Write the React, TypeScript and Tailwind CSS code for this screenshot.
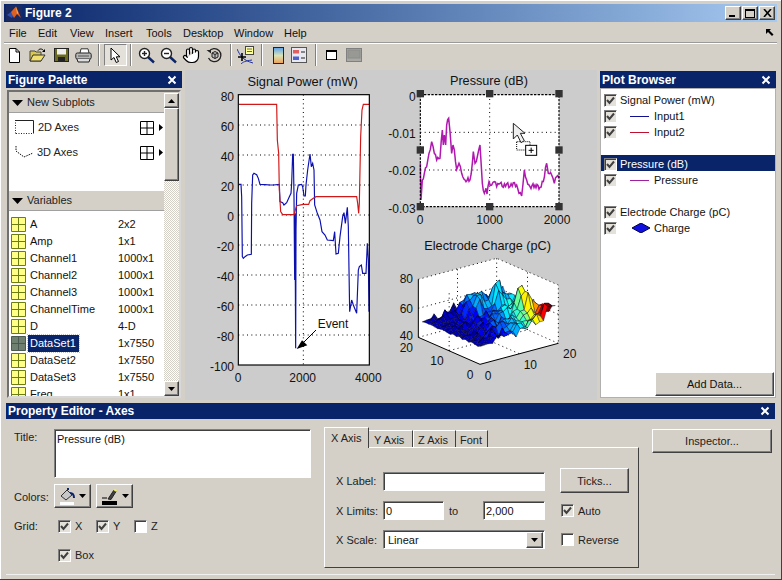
import React from 'react';
import { Hand } from 'lucide-react';

const raised =
  'border border-t-white border-l-white border-r-[#404040] border-b-[#404040] shadow-[inset_-1px_-1px_0_#808080] bg-[#d4d0c8]';
const sunken =
  'border border-t-[#808080] border-l-[#808080] border-r-white border-b-white shadow-[inset_1px_1px_0_#404040] bg-white';

const CloseX = () => (
  <svg width="10" height="10" viewBox="0 0 10 10">
    <path d="M1.5 1.5L8.5 8.5M8.5 1.5L1.5 8.5" stroke="#fff" strokeWidth="2" />
  </svg>
);

const Check = ({ on = true }: { on?: boolean }) => (
  <span
    className={`shrink-0 w-[13px] h-[13px] border border-t-[#808080] border-l-[#808080] border-r-white border-b-white shadow-[inset_1px_1px_0_#404040] flex items-center justify-center ${
      on ? 'bg-[#e4e1da]' : 'bg-white'
    }`}
  >
    {on && (
      <svg width="9" height="9" viewBox="0 0 9 9">
        <path d="M1 4L3.5 7L8 1.5" fill="none" stroke="#404040" strokeWidth="2" />
      </svg>
    )}
  </span>
);

const PanelTitle = ({ title }: { title: string }) => (
  <div className="h-[17px] bg-[#0a246a] text-white font-bold text-[12px] flex items-center justify-between pl-[2px] pr-[5px] shrink-0">
    <span>{title}</span>
    <CloseX />
  </div>
);

const Sep = ({ w }: { w: string }) => (
  <div className={`${w} flex justify-center shrink-0`}>
    <div className="w-[2px] h-[22px] border-l border-l-[#808080] border-r border-r-white" />
  </div>
);

const Slot = ({ w, children }: { w: string; children: React.ReactNode }) => (
  <div className={`${w} h-[22px] flex items-center justify-center shrink-0`}>{children}</div>
);

const Magnifier = ({ plus }: { plus?: boolean }) => (
  <svg width="17" height="17" viewBox="0 0 17 17">
    <path d="M10 10L16 15.5" stroke="#0a246a" strokeWidth="2.4" />
    <circle cx="6.5" cy="6.5" r="5" fill="#fff" stroke="#222" strokeWidth="1.4" />
    <path d="M4 6.5H9" stroke="#222" strokeWidth="1.4" />
    {plus && <path d="M6.5 4V9" stroke="#222" strokeWidth="1.4" />}
  </svg>
);

const Toolbar = () => (
  <div className="h-[24px] flex items-start ml-[-1px]">
    <Slot w="w-[22px]">
      <svg width="13" height="15" viewBox="0 0 13 15">
        <path d="M1.5.5H8L11.5 4V14.5H1.5Z" fill="#fff" stroke="#000" />
        <path d="M8 .5V4H11.5" fill="none" stroke="#000" />
      </svg>
    </Slot>
    <Slot w="w-[25px]">
      <svg width="17" height="14" viewBox="0 0 17 14">
        <path d="M1 3H6L7 4H12V13H1Z" fill="#d8c850" stroke="#444" />
        <path d="M1 13L4 7H16L12 13Z" fill="#f0e070" stroke="#333" />
        <path d="M9 2.5C10.5.5 13 .5 14.5 2.5" fill="none" stroke="#000" />
        <path d="M16 1V4H13Z" fill="#000" />
      </svg>
    </Slot>
    <Slot w="w-[22px]">
      <svg width="15" height="14" viewBox="0 0 15 14">
        <rect x=".5" y=".5" width="14" height="13" fill="#6a6a20" stroke="#222" />
        <rect x="3" y="1" width="9" height="5.5" fill="#eee" />
        <rect x="4" y="9" width="7" height="4.5" fill="#222" />
      </svg>
    </Slot>
    <Slot w="w-[22px]">
      <svg width="17" height="15" viewBox="0 0 17 15">
        <path d="M5 5L6 .8H13L14 5" fill="#fff" stroke="#333" />
        <rect x=".8" y="5" width="15.4" height="6" rx="1.5" fill="#b8b8b8" stroke="#222" />
        <path d="M3 8H14" stroke="#555" />
        <path d="M2 11L3 14H14L15 11" fill="#ddd" stroke="#222" />
      </svg>
    </Slot>
    <Sep w="w-[10px]" />
    <div className="w-[23px] h-[22px] flex items-center justify-center shrink-0 border border-t-[#808080] border-l-[#808080] border-r-white border-b-white bg-[#e4e1da]">
      <svg width="11" height="17" viewBox="0 0 11 17">
        <path d="M1 1V13L4 10.5L6.2 15.5L8.5 14.5L6.3 9.8H10Z" fill="#fff" stroke="#000" />
      </svg>
    </div>
    <Sep w="w-[8px]" />
    <Slot w="w-[22px]"><Magnifier plus /></Slot>
    <Slot w="w-[22px]"><Magnifier /></Slot>
    <Slot w="w-[24px]"><Hand size={18} fill="#fff" stroke="#000" strokeWidth={1.6} /></Slot>
    <Slot w="w-[23px]">
      <svg width="17" height="16" viewBox="0 0 17 16">
        <path d="M3 4.5A6.5 6.5 0 1 1 2.5 11" fill="none" stroke="#222" strokeWidth="1.3" />
        <path d="M.5 3H5V6.5Z" fill="#222" />
        <path d="M6 6L9 4.5L12 6V10L9 11.5L6 10Z" fill="#bbb" stroke="#222" />
        <path d="M6 6L9 7.5L12 6M9 7.5V11.5" fill="none" stroke="#222" />
      </svg>
    </Slot>
    <Sep w="w-[10px]" />
    <Slot w="w-[20px]">
      <svg width="18" height="19" viewBox="0 0 18 19">
        <path d="M0 3C3 9 5 14 16 17" fill="none" stroke="#2030a0" />
        <path d="M4 18C6 16 8 15 15 14" fill="none" stroke="#2030a0" />
        <rect x="8.5" y=".5" width="8" height="8" fill="#ffff99" stroke="#444" />
        <path d="M10 3H15M10 5.5H15" stroke="#666" />
        <path d="M1 11H9M5 7V15" stroke="#000" strokeWidth="1.6" />
      </svg>
    </Slot>
    <Sep w="w-[12px]" />
    <Slot w="w-[20px]">
      <svg width="11" height="17" viewBox="0 0 11 17">
        <defs>
          <linearGradient id="cb" x1="0" y1="0" x2="0" y2="1">
            <stop offset="0" stopColor="#5aa0e8" />
            <stop offset=".5" stopColor="#d8e4b8" />
            <stop offset="1" stopColor="#f0a050" />
          </linearGradient>
        </defs>
        <rect x=".5" y=".5" width="10" height="16" fill="url(#cb)" stroke="#222" />
      </svg>
    </Slot>
    <Slot w="w-[22px]">
      <svg width="16" height="16" viewBox="0 0 16 16">
        <rect x=".5" y=".5" width="15" height="15" fill="#e8e8f0" stroke="#555" />
        <rect x="2" y="3" width="6" height="3.5" fill="#e06060" />
        <rect x="2" y="9.5" width="6" height="3.5" fill="#5060d0" />
        <path d="M10 5H14M10 11H14" stroke="#222" />
      </svg>
    </Slot>
    <Sep w="w-[12px]" />
    <Slot w="w-[18px]">
      <svg width="11" height="10" viewBox="0 0 11 10">
        <rect x=".5" y=".5" width="10" height="9" fill="#fff" stroke="#000" />
        <path d="M1 1.5H10" stroke="#000" />
      </svg>
    </Slot>
    <Slot w="w-[28px]">
      <svg width="16" height="14" viewBox="0 0 16 14">
        <rect x=".5" y=".5" width="15" height="13" fill="#a8a8a4" stroke="#808080" />
        <rect x="2" y="2" width="12" height="8" fill="#989894" stroke="#8c8c88" />
      </svg>
    </Slot>
  </div>
);

const menus: [string, string][] = [
  ['File', 'w-[29px]'],
  ['Edit', 'w-[32px]'],
  ['View', 'w-[35px]'],
  ['Insert', 'w-[41px]'],
  ['Tools', 'w-[37px]'],
  ['Desktop', 'w-[51px]'],
  ['Window', 'w-[50px]'],
  ['Help', 'w-[30px]'],
];

const variables: [string, string][] = [
  ['A', '2x2'],
  ['Amp', '1x1'],
  ['Channel1', '1000x1'],
  ['Channel2', '1000x1'],
  ['Channel3', '1000x1'],
  ['ChannelTime', '1000x1'],
  ['D', '4-D'],
  ['DataSet1', '1x7550'],
  ['DataSet2', '1x7550'],
  ['DataSet3', '1x7550'],
  ['Freq', '1x1'],
];

const SectionHead = ({ label }: { label: string }) => (
  <div className="h-[20px] bg-[#d4d0c8] border-b border-b-[#a0a0a0] flex items-center gap-[4px] pl-[3px] shrink-0 text-[#222]">
    <svg width="11" height="6" viewBox="0 0 11 6">
      <path d="M0 0H11L5.5 6Z" fill="#000" />
    </svg>
    <span>{label}</span>
  </div>
);

const GridPick = () => (
  <div className="flex items-center gap-[5px] ml-auto mr-[1px]">
    <svg width="14" height="14" viewBox="0 0 14 14">
      <path d="M.5.5H13.5V13.5H.5ZM7 .5V13.5M.5 7H13.5" fill="#fff" stroke="#000" />
    </svg>
    <svg width="4" height="7" viewBox="0 0 4 7">
      <path d="M0 0L4 3.5L0 7Z" fill="#000" />
    </svg>
  </div>
);

const VarIcon = ({ selected }: { selected?: boolean }) => (
  <svg width="15" height="15" viewBox="0 0 15 15" className="shrink-0">
    <path
      d="M.5.5H14.5V14.5H.5ZM7.5.5V14.5M.5 7.5H14.5"
      fill={selected ? '#6f7f70' : '#ffff88'}
      stroke={selected ? '#4a5a50' : '#6d7d10'}
      strokeWidth="1"
    />
  </svg>
);

const ScrollBtn = ({ up }: { up?: boolean }) => (
  <div className={`${raised} h-[15px] flex items-center justify-center shrink-0`}>
    <svg width="7" height="4" viewBox="0 0 7 4">
      <path d={up ? 'M0 4H7L3.5 0Z' : 'M0 0H7L3.5 4Z'} fill="#000" />
    </svg>
  </div>
);

const FigurePalette = () => (
  <div className="w-[176px] shrink-0 pt-[1px] pb-[2px] flex flex-col">
    <PanelTitle title="Figure Palette" />
    <div className="mt-[2px] mx-[1px] flex-1 min-h-0 border-2 border-t-[#707070] border-l-[#707070] border-r-[#d8d8d8] border-b-[#d8d8d8] flex bg-[#d4d0c8] pt-[1px]">
      <div className="flex-1 min-w-0 flex flex-col overflow-hidden bg-white">
        <SectionHead label="New Subplots" />
        <div className="h-[78px] shrink-0">
          <div className="h-[25px] flex items-center pl-[6px] mt-[2px]">
            <svg width="19" height="15" viewBox="0 0 19 15" className="shrink-0">
              <path d="M1 .5H18.5V13.5" fill="none" stroke="#222" />
              <path d="M.5 0V14M1 13.5H18" fill="none" stroke="#222" strokeDasharray="1 1.5" />
            </svg>
            <span className="ml-[4px] text-[#222]">2D Axes</span>
            <GridPick />
          </div>
          <div className="h-[25px] flex items-center pl-[6px]">
            <svg width="19" height="13" viewBox="0 0 19 13" className="shrink-0">
              <path d="M1 0V5L9 11L18 7" fill="none" stroke="#111" strokeDasharray="1.5 1" />
            </svg>
            <span className="ml-[3px] text-[#222]">3D Axes</span>
            <GridPick />
          </div>
        </div>
        <SectionHead label="Variables" />
        <div className="pt-[5px] flex flex-col">
          {variables.map(([name, size]) => (
            <div key={name} className="h-[17px] shrink-0 flex items-center pl-[2px]">
              <VarIcon selected={name === 'DataSet1'} />
              <span className="ml-[4px] w-[88px]">
                <span
                  className={
                    name === 'DataSet1'
                      ? 'inline-block bg-[#0a246a] text-white pr-[3px] pl-[2px] outline-1 outline-dotted outline-[#c0c0c0] -ml-[2px]'
                      : 'text-[#111]'
                  }
                >
                  {name}
                </span>
              </span>
              <span className="text-[#111]">{size}</span>
            </div>
          ))}
        </div>
      </div>
      <div className="w-[15px] shrink-0 flex flex-col bg-[repeating-conic-gradient(#d4d0c8_0_25%,#ffffff_0_50%)] bg-[length:2px_2px]">
        <ScrollBtn up />
        <div className={`${raised} h-[73px] shrink-0`} />
        <div className="flex-1" />
        <ScrollBtn />
      </div>
    </div>
  </div>
);

const blue =
  '147,343 153,343 155,380 157,560 160,565 165,560 172,555 184,553 185,400 188,315 192,310 200,314 205,325 210,343 225,344 240,345 250,345 268,343 270,395 278,398 282,405 290,398 298,380 303,370 305,340 308,253 310,253 312,380 314,630 315,430 317,835 318,480 320,370 325,345 335,343 338,350 342,378 346,378 348,345 353,300 360,252 364,290 368,280 372,300 374,405 382,430 390,450 396,485 405,495 412,510 430,512 434,485 438,552 445,550 450,500 458,440 462,428 466,460 472,412 475,470 477,600 479,725 485,690 490,705 500,730 505,600 508,590 514,585 518,610 528,610 532,520 535,570 537,725';
const red =
  '147,103 260,103 262,210 266,250 268,360 272,425 278,434 312,434 316,420 320,407 340,403 356,403 360,392 370,385 378,380 500,380 503,400 506,430 508,400 512,200 516,120 520,103 537,103';
const magentaBase =
  '106,280 108,390 112,330 118,310 125,290 132,250 140,215 148,250 155,270 165,265 172,180 175,225 178,195 182,225 185,165 191,145 195,185 200,250 204,225 208,240 215,298 222,280 230,310 240,330 255,330 262,280 265,245 270,280 278,255 285,225 289,290 292,340 298,370 303,355 306,372 312,335 320,345 328,335 335,350 345,340 355,352 365,342 375,350 385,338 395,345 402,370 410,378 418,300 425,330 435,350 450,345 465,352 475,335 485,280 490,310 500,315 508,340 515,320 522,325';

// the pressure trace is noisy, so break each segment up and shake it a bit
const roughen = (src: string, amp: number) => {
  const pts = src.split(' ').map((p) => p.split(',').map(Number));
  const out: string[] = [];
  pts.forEach(([x, y], i) => {
    out.push(`${x},${y}`);
    const next = pts[i + 1];
    if (!next) return;
    const steps = Math.max(1, Math.floor((next[0] - x) / 3));
    for (let s = 1; s < steps; s++) {
      const t = s / steps;
      const wob = Math.sin((x + s) * 91.7 + s * 13.1) * amp;
      out.push(`${x + (next[0] - x) * t},${y + (next[1] - y) * t + wob}`);
    }
  });
  return out.join(' ');
};
const magenta = roughen(magentaBase, 7);

const SignalPlot = () => (
  <svg width="195" height="320" viewBox="0 0 585 960" className="shrink-0">
    <rect x="145" y="74" width="393" height="811" fill="#fff" />
    <g stroke="#000" strokeWidth="3" strokeDasharray="3 10">
      {[165, 255, 345, 435, 525, 615, 705, 795].map((y) => (
        <line key={y} x1="145" x2="538" y1={y} y2={y} />
      ))}
      <line x1="340" x2="340" y1="74" y2="885" />
    </g>
    <polyline points={blue} fill="none" stroke="#0c10b0" strokeWidth="3.5" />
    <polyline points={red} fill="none" stroke="#d01818" strokeWidth="3.5" />
    <rect x="145" y="74" width="393" height="811" fill="none" stroke="#000" strokeWidth="3.5" />
    <g fontSize="36" textAnchor="end" fill="#111">
      {['80', '60', '40', '20', '0', '-20', '-40', '-60', '-80', '-100'].map((t, i) => (
        <text key={t} x="132" y={92 + i * 90}>
          {t}
        </text>
      ))}
    </g>
    <g fontSize="36" textAnchor="middle" fill="#111">
      <text x="144" y="936">0</text>
      <text x="338" y="936">2000</text>
      <text x="535" y="936">4000</text>
      <text x="338" y="48" fontSize="38.500">Signal Power (mW)</text>
    </g>
    <text x="383" y="773" fontSize="36" fill="#111">Event</text>
    <path d="M378 780L340 818" stroke="#000" strokeWidth="3" />
    <path d="M320 837L352 826L336 811Z" fill="#000" />
  </svg>
);

const handlePos: [number, number][] = [
  [106, 71], [314, 71], [522, 71],
  [106, 240], [522, 240],
  [106, 410], [314, 410], [522, 410],
];

const PressurePlot = () => (
  <svg width="210" height="160" viewBox="0 0 630 480" className="block">
    <rect x="106" y="74" width="416" height="336" fill="#fff" />
    <g stroke="#000" strokeWidth="3" strokeDasharray="3 10">
      <line x1="106" x2="522" y1="187" y2="187" />
      <line x1="106" x2="522" y1="300" y2="300" />
      <line x1="314" x2="314" y1="74" y2="410" />
    </g>
    <polyline points={magenta} fill="none" stroke="#b018b0" strokeWidth="4.500" />
    <rect x="106" y="74" width="416" height="336" fill="none" stroke="#000" strokeWidth="3.5" strokeDasharray="7 4" />
    {handlePos.map(([x, y]) => (
      <rect key={`${x}-${y}`} x={x - 11} y={y - 11} width="22" height="22" fill="#333" />
    ))}
    <g fontSize="36" textAnchor="end" fill="#111">
      <text x="92" y="92">0</text>
      <text x="92" y="203">-0.01</text>
      <text x="92" y="316">-0.02</text>
      <text x="92" y="430">-0.03</text>
    </g>
    <g fontSize="36" textAnchor="middle" fill="#111">
      <text x="105" y="463">0</text>
      <text x="314" y="463">1000</text>
      <text x="516" y="463">2000</text>
      <text x="312" y="46" fontSize="38">Pressure (dB)</text>
    </g>
    <rect x="395" y="215" width="40" height="25" fill="none" stroke="#000" strokeWidth="3" strokeDasharray="3 3" />
    <path d="M385 160V207L397 195L408 218L418 212L406 190H420Z" fill="#eee" stroke="#222" strokeWidth="3" />
    <rect x="422" y="226" width="33" height="30" fill="#fff" stroke="#000" strokeWidth="3" />
    <path d="M431 241H446M438.500 233V249" stroke="#000" strokeWidth="3" />
  </svg>
);

const clamp = (v: number) => Math.max(0, Math.min(1, v));
const jet = (c: number) => {
  const r = Math.round(255 * clamp(1.5 - Math.abs(4 * c - 3)));
  const g = Math.round(255 * clamp(1.5 - Math.abs(4 * c - 2)));
  const b = Math.round(255 * clamp(1.5 - Math.abs(4 * c - 1)));
  return `rgb(${r},${g},${b})`;
};
const gauss = (x: number, y: number, px: number, py: number, h: number, s: number) =>
  h * Math.exp(-((x - px) ** 2 + (y - py) ** 2) / (2 * s * s));
const hash = (x: number, y: number) => {
  const v = Math.sin(x * 12.9898 + y * 78.233) * 43758.5453;
  return (v - Math.floor(v)) * 2 - 1;
};
const surfZ = (x: number, y: number) =>
  50 +
  x * 0.45 +
  4 * hash(x, y) * Math.min(1, x / 6) +
  gauss(x, y, 11.3, 16, 12, 1.6) +
  gauss(x, y, 15.7, 14, 18, 0.9) +
  gauss(x, y, 16.3, 8, 17, 0.9) +
  gauss(x, y, 17.2, 6, 10, 0.8) +
  gauss(x, y, 18.9, 2, 8, 1.1);
const surfC = (x: number, y: number, z: number) =>
  clamp(
    0.04 +
      0.95 * (x / 20) ** 2 * (1 - y / 22) +
      Math.max(z - 55, 0) * 0.008 +
      gauss(x, y, 11.3, 16, 0.12, 2) +
      gauss(x, y, 19, 2.5, 0.25, 1.2) +
      0.05 * hash(x + 3, y + 7) * Math.min(1, x / 6),
  );
const project = (x: number, y: number, z: number) =>
  `${285 + 11.75 * x - 9.25 * y},${403 - 3.15 * x - 4.05 * y - 4.35 * (z - 40)}`;

const quads: { key: string; pts: string; fill: string }[] = [];
for (let sum = 38; sum >= 2; sum--) {
  for (let x = 1; x < 20; x++) {
    const y = sum - x;
    if (y < 1 || y >= 20) continue;
    const corners: [number, number][] = [
      [x, y],
      [x + 1, y],
      [x + 1, y + 1],
      [x, y + 1],
    ];
    const zs = corners.map(([a, b]) => surfZ(a, b));
    const avg = zs.reduce((s, v) => s + v, 0) / 4;
    quads.push({
      key: `${x}-${y}`,
      pts: corners.map(([a, b], i) => project(a, b, zs[i])).join(' '),
      fill: jet(surfC(x + 0.5, y + 0.5, avg)),
    });
  }
}

const ChargePlot = () => (
  <svg width="210" height="170" viewBox="0 0 630 510" className="block">
    <path d="M100 148L335 85L520 165V340L285 403L100 322Z" fill="#fff" />
    <g fill="none" stroke="#000" strokeWidth="3" strokeDasharray="3 10">
      <path d="M100 148L335 85L520 165V340" />
      <path d="M335 85V259M100 322L335 259L520 340" />
      <path d="M100 235L335 172L520 253" />
      <path d="M192.500 362V188M217.500 290V117M427.500 299.500V125" />
      <path d="M402.500 371L217.500 290M192.500 362L427.500 299.500" />
    </g>
    <path d="M100 148V322L285 403L520 340" fill="none" stroke="#000" strokeWidth="3" />
    {quads.map((q) => (
      <polygon key={q.key} points={q.pts} fill={q.fill} stroke="#020220" strokeOpacity=".7" strokeWidth="1.8" />
    ))}
    <g fontSize="36" fill="#111" textAnchor="middle">
      <text x="64" y="160">80</text>
      <text x="64" y="250">60</text>
      <text x="64" y="331">40</text>
      <text x="64" y="365">20</text>
      <text x="156" y="406">10</text>
      <text x="255" y="446">0</text>
      <text x="309" y="449">0</text>
      <text x="436" y="418">10</text>
      <text x="554" y="385">20</text>
      <text x="308" y="60" fontSize="38">Electrode Charge (pC)</text>
    </g>
  </svg>
);

const BrowserRow = ({
  label,
  selected,
  swatch,
  className = '',
}: {
  label: string;
  selected?: boolean;
  swatch?: string;
  className?: string;
}) => (
  <div
    className={`h-[16px] flex items-center pl-[3px] pr-[1px] ${
      selected ? 'bg-[#0a246a] text-white pt-[2px]' : 'text-[#111]'
    } ${className}`}
  >
    <Check />
    {swatch === 'diamond' ? (
      <>
        <svg width="18" height="10" viewBox="0 0 18 10" className="ml-[15px] mr-[4px] shrink-0">
          <path d="M0 5L9 0L18 5L9 10Z" fill="#1010e0" stroke="#000040" />
        </svg>
        <span>{label}</span>
      </>
    ) : swatch ? (
      <>
        <div className={`ml-[13px] w-[19px] h-[1px] shrink-0 ${swatch}`} />
        <span className="ml-[5px]">{label}</span>
      </>
    ) : (
      <span className="ml-[3px]">{label}</span>
    )}
  </div>
);

const PlotBrowser = () => (
  <div className="w-[176px] shrink-0 pt-[1px] pb-[2px] flex flex-col">
    <PanelTitle title="Plot Browser" />
    <div className="flex-1 min-h-0 bg-white border border-[#b0b0b0] flex flex-col justify-between pt-[3px]">
      <div className="flex flex-col">
        <BrowserRow label="Signal Power (mW)" />
        <BrowserRow label="Input1" swatch="bg-[#101090]" />
        <BrowserRow label="Input2" swatch="bg-[#c01030]" />
        <div className="h-[15px]" />
        <BrowserRow label="Pressure (dB)" selected />
        <BrowserRow label="Pressure" swatch="bg-[#a020a0]" className="mt-[1px]" />
        <div className="h-[16px]" />
        <BrowserRow label="Electrode Charge (pC)" />
        <BrowserRow label="Charge" swatch="diamond" />
      </div>
      <div className="flex justify-end pr-[1px] pb-[1px]">
        <button className={`${raised} w-[119px] h-[24px] text-[#111] text-[11px]`}>Add Data...</button>
      </div>
    </div>
  </div>
);

const DropArrow = () => (
  <svg width="7" height="4" viewBox="0 0 7 4" className="shrink-0">
    <path d="M0 0H7L3.5 4Z" fill="#000" />
  </svg>
);

const PropertyEditor = () => (
  <div className="mt-[3px] mx-[2px] flex flex-col">
    <div className="h-[16px] bg-[#0a246a] text-white font-bold text-[12px] flex items-center justify-between pl-[2px] pr-[5px] shrink-0">
      <span>Property Editor - Axes</span>
      <CloseX />
    </div>
    <div className="h-[156px] flex pl-[8px] pt-[8px] text-[#222] border-b border-b-[#f0f0f0]">
      <div className="w-[297px] shrink-0 flex flex-col">
        <div className="flex mt-[2px]">
          <span className="w-[40px]">Title:</span>
          <div className={`${sunken} w-[257px] h-[49px] pl-[2px] pt-[1px] text-[#111]`}>Pressure (dB)</div>
        </div>
        <div className="flex items-center mt-[6px] h-[24px]">
          <span className="w-[40px] pt-[2px]">Colors:</span>
          <button className={`${raised} w-[37px] h-[24px] flex items-center justify-center gap-[4px]`}>
            <svg width="16" height="17" viewBox="0 0 16 17">
              <path d="M2 8L8 2L13 7L7 12Z" fill="#c8c8c8" stroke="#333" />
              <path d="M9 2V0M11 5C14 5 15 7 15 10" fill="none" stroke="#0a246a" strokeWidth="2" />
              <rect x="1" y="14" width="14" height="3" fill="#fff" />
            </svg>
            <DropArrow />
          </button>
          <button className={`${raised} w-[37px] h-[24px] ml-[5px] flex items-center justify-center gap-[4px]`}>
            <svg width="17" height="17" viewBox="0 0 17 17">
              <path d="M7 11L13 2L15 3.500L10 11.500Z" fill="#404040" stroke="#222" />
              <path d="M13 1.500L15.500 3" stroke="#eeee66" strokeWidth="2" />
              <path d="M1 10H6" stroke="#000" />
              <rect x="1" y="13" width="15" height="4" fill="#000" />
            </svg>
            <DropArrow />
          </button>
        </div>
        <div className="flex items-center mt-[10px] h-[16px]">
          <span className="w-[44px]">Grid:</span>
          <Check />
          <span className="ml-[4px] w-[21px]">X</span>
          <Check />
          <span className="ml-[4px] w-[21px]">Y</span>
          <Check on={false} />
          <span className="ml-[4px]">Z</span>
        </div>
        <div className="flex items-center mt-[13px] h-[16px] pl-[44px]">
          <Check />
          <span className="ml-[4px]">Box</span>
        </div>
      </div>
      <div className="w-[315px] ml-[13px] shrink-0 flex flex-col">
        <div className="h-[20px] flex items-end relative z-10">
          <div className="w-[45px] h-[21px] -mb-[1px] bg-[#d4d0c8] border-t border-l border-t-white border-l-white border-r border-r-[#404040] pl-[6px] pt-[2px]">X Axis</div>
          <div className="w-[44px] h-[17px] border-t border-t-white border-r border-r-[#404040] pl-[5px] pt-[1px]">Y Axis</div>
          <div className="w-[43px] h-[17px] border-t border-l border-t-white border-l-white border-r border-r-[#404040] pl-[4px] pt-[1px]">Z Axis</div>
          <div className="w-[32px] h-[17px] border-t border-t-white border-r border-r-[#404040] pl-[4px] pt-[1px]">Font</div>
        </div>
        <div className="h-[121px] border border-t-white border-l-white border-r-[#404040] border-b-[#404040] pl-[11px] pt-[20px]">
          <div className="flex items-center h-[25px]">
            <span className="w-[47px] shrink-0 pt-[2px]">X Label:</span>
            <div className={`${sunken} w-[162px] h-[19px] mt-[2px]`} />
            <button className={`${raised} w-[69px] h-[25px] ml-[15px] pt-[1px] text-[11px] text-[#222]`}>Ticks...</button>
          </div>
          <div className="flex items-center h-[19px] mt-[8px]">
            <span className="w-[47px] shrink-0 pt-[2px]">X Limits:</span>
            <div className={`${sunken} w-[61px] h-[19px] pl-[2px] text-[#111] leading-[18px]`}>0</div>
            <span className="w-[39px] pl-[5px] pt-[2px]">to</span>
            <div className={`${sunken} w-[62px] h-[19px] pl-[2px] text-[#111] leading-[18px]`}>2,000</div>
            <div className="ml-[16px]"><Check /></div>
            <span className="ml-[4px] pt-[2px]">Auto</span>
          </div>
          <div className="flex items-center h-[19px] mt-[10px]">
            <span className="w-[47px] shrink-0 pt-[2px]">X Scale:</span>
            <div className={`${sunken} w-[162px] h-[19px] pl-[4px] pr-[1px] text-[#111] flex items-center justify-between`}>
              <span className="pt-[1px]">Linear</span>
              <div className={`${raised} w-[17px] h-[16px] flex items-center justify-center`}>
                <DropArrow />
              </div>
            </div>
            <div className="ml-[16px]"><Check on={false} /></div>
            <span className="ml-[4px] pt-[2px]">Reverse</span>
          </div>
        </div>
      </div>
      <div className="ml-[13px]">
        <button className={`${raised} w-[120px] h-[24px] mt-[2px] pt-[1px] text-[11px] text-[#222]`}>Inspector...</button>
      </div>
    </div>
  </div>
);

export default function App() {
  return (
    <div className="w-[782px] h-[580px] overflow-hidden bg-[#d4d0c8] p-[4px] pb-[2px] text-[11px] font-[family-name:'Liberation_Sans',Arial,sans-serif] border-r border-b border-r-[#404040] border-b-[#404040] shadow-[inset_1px_1px_0_#ffffff]">
      {/* title bar */}
      <div className="h-[18px] bg-gradient-to-r from-[#0a246a] to-[#a6caf0] flex items-center pl-[2px] pr-[2px] text-white font-bold text-[12px]">
        <svg width="16" height="16" viewBox="0 0 16 16" className="shrink-0">
          <rect width="16" height="16" fill="#1a2a60" />
          <path d="M1 10L5 7L8 9L6 13Z" fill="#3050b0" />
          <path d="M5 7L10 1.500L15 13L11 9L8 13Z" fill="#e06020" />
          <path d="M10 1.500L12 8L11 9Z" fill="#f8c060" />
        </svg>
        <span className="ml-[3px]">Figure 2</span>
        <div className="ml-auto flex items-center">
          <div className={`${raised} w-[16px] h-[14px] relative`}>
            <div className="absolute left-[3px] bottom-[2px] w-[6px] h-[2px] bg-black" />
          </div>
          <div className={`${raised} w-[16px] h-[14px] ml-[1px] flex items-center justify-center`}>
            <div className="w-[10px] h-[9px] border border-black border-t-2" />
          </div>
          <div className={`${raised} w-[16px] h-[14px] ml-[1px] flex items-center justify-center`}>
            <svg width="9" height="8" viewBox="0 0 9 8">
              <path d="M1 0L8 8M8 0L1 8" stroke="#000" strokeWidth="1.6" />
            </svg>
          </div>
        </div>
      </div>
      {/* menu */}
      <div className="h-[20px] flex items-center pl-[5px] pr-[3px] text-[#111] text-[11px]">
        {menus.map(([m, w]) => (
          <span key={m} className={`${w} pt-[2px]`}>
            {m}
          </span>
        ))}
        <svg width="8" height="7" viewBox="0 0 8 7" className="ml-auto">
          <path d="M0 0H5L3.500 1.500L7.500 5.500L6 7L2 3L0 5Z" fill="#000" />
        </svg>
      </div>
      <div className="h-[2px] border-t border-t-[#9a9a9a] border-b border-b-white" />
      <Toolbar />
      <div className="h-[2px]" />
      {/* main row */}
      <div className="h-[330px] flex pl-[2px]">
        <FigurePalette />
        <div className="w-[412px] ml-[3px] shrink-0 bg-[#cccccc] flex pl-[5px] overflow-hidden">
          <SignalPlot />
          <div className="flex flex-col shrink-0">
            <PressurePlot />
            <ChargePlot />
          </div>
        </div>
        <div className="ml-[3px]">
          <div className="h-full flex">
            <PlotBrowser />
          </div>
        </div>
      </div>
      <PropertyEditor />
    </div>
  );
}
